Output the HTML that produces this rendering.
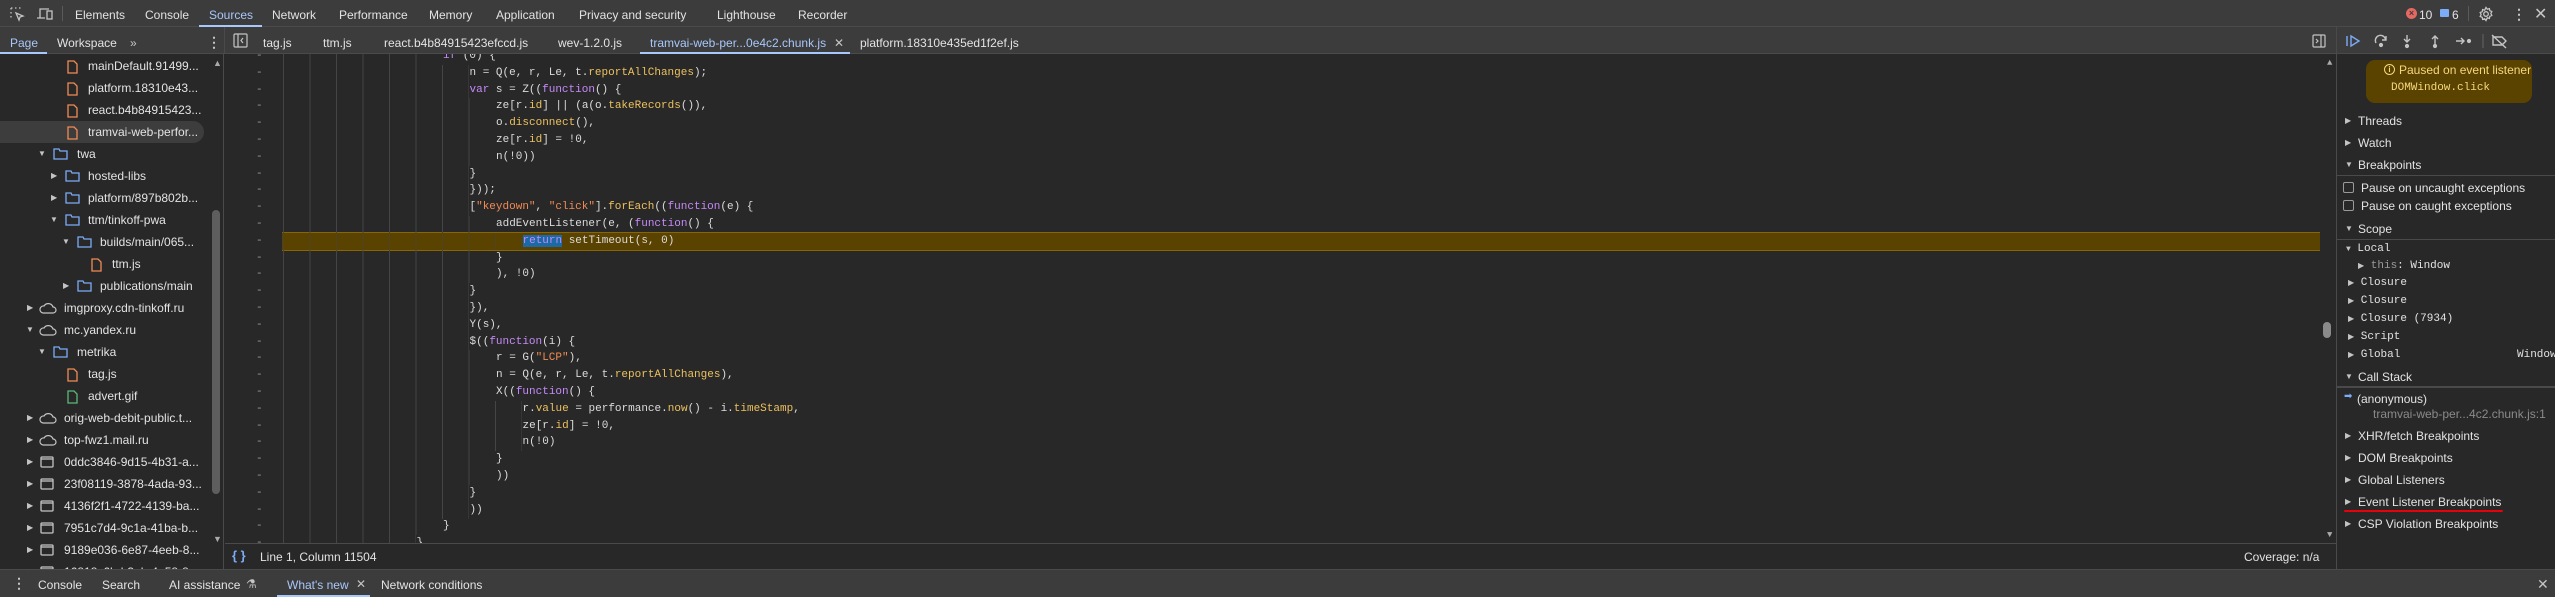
<!DOCTYPE html>
<html><head><meta charset="utf-8"><style>
*{margin:0;padding:0;box-sizing:border-box}
body{width:2555px;height:597px;overflow:hidden;background:#282828;font-family:"Liberation Sans",sans-serif;font-size:12px;color:#e3e3e3;position:relative}
.a{position:absolute;white-space:nowrap}
#top{left:0;top:0;width:2555px;height:27px;background:#3c3c3c;border-bottom:1px solid #4a4a4a}
#tabs{left:0;top:27px;width:2555px;height:27px;background:#3c3c3c;border-bottom:1px solid #4a4a4a}
.tt{top:8px;color:#e3e3e3}
.t2{top:36px;color:#e3e3e3}
.ul{height:2px;background:#a8c7fa}
#nav{left:0;top:54px;width:224px;height:515px;background:#282828;overflow:hidden;border-right:1px solid #4a4a4a}
.r{position:absolute;left:0;height:22px;width:210px;line-height:22px;white-space:nowrap}
.ar{position:absolute;top:0;font-size:8px;color:#c4c4c4}
.ic{position:absolute;top:5px}
#code{left:225px;top:54px;width:2111px;height:489px;background:#282828;overflow:hidden;font-family:"Liberation Mono",monospace;font-size:11px;color:#dcdcdc}
.l{position:absolute;left:58px;height:17px;line-height:17px;width:2000px;white-space:pre}
.g{position:absolute;left:0;top:0;height:17px;background:repeating-linear-gradient(to right,#454545 0 1px,transparent 1px 26.5px)}
.d{position:absolute;left:31px;height:17px;line-height:17px;color:#9a9a9a}
.k{color:#c58af9}.p{color:#ecc15e}.s{color:#f28b54}
.sel{background:#1b6aa6}
#rp{left:2336px;top:54px;width:219px;height:515px;background:#282828;border-left:1px solid #4a4a4a}
.h{position:absolute;left:0;width:219px;height:22px;line-height:22px;background:#282828}
.h b{position:absolute;left:8px;font-size:8px;color:#c4c4c4;font-weight:normal}
.h span{position:absolute;left:21px}
.m{font-family:"Liberation Mono",monospace;font-size:11px}
</style></head><body>
<div id="top" class="a"></div>
<svg class="a" style="left:9px;top:6px" width="16" height="16" viewBox="0 0 16 16" fill="none" stroke="#c4c4c4" stroke-width="1.3"><path d="M2 2h2M6 2h2M2 2v2M2 6v2M2 10v2M10 2h2" stroke-dasharray="1.5 1"/><path d="M7 7l7 3-3 1-1 3z"/></svg>
<svg class="a" style="left:36px;top:6px" width="18" height="16" viewBox="0 0 18 16" fill="none" stroke="#c4c4c4" stroke-width="1.3"><path d="M4 12V3h9M1 12h8"/><rect x="11" y="5" width="5" height="8"/></svg>
<div class="a" style="left:62px;top:6px;width:1px;height:15px;background:#5a5a5a"></div>
<div class="a tt" style="left:75px">Elements</div>
<div class="a tt" style="left:145px">Console</div>
<div class="a tt" style="left:209px;color:#a8c7fa">Sources</div>
<div class="a ul" style="left:199px;top:25px;width:63px"></div>
<div class="a tt" style="left:272px">Network</div>
<div class="a tt" style="left:339px">Performance</div>
<div class="a tt" style="left:429px">Memory</div>
<div class="a tt" style="left:496px">Application</div>
<div class="a tt" style="left:579px">Privacy and security</div>
<div class="a tt" style="left:717px">Lighthouse</div>
<div class="a tt" style="left:798px">Recorder</div>
<div class="a" style="left:2406px;top:8px;width:11px;height:11px;border-radius:50%;background:#e46962;color:#3c3c3c;font-size:9px;line-height:11px;text-align:center;font-weight:bold">×</div>
<div class="a tt" style="left:2419px">10</div>
<div class="a" style="left:2440px;top:9px;width:9px;height:8px;background:#7cacf8;border-radius:1px"></div>
<div class="a tt" style="left:2452px">6</div>
<div class="a" style="left:2468px;top:6px;width:1px;height:15px;background:#5a5a5a"></div>
<svg class="a" style="left:2478px;top:6px" width="16" height="16" viewBox="0 0 16 16" fill="none" stroke="#c4c4c4" stroke-width="1.3"><circle cx="8" cy="8" r="2.3"/><path d="M8 1.5l1.3 1.7 2.1-.6.4 2.1 2 .8-.9 2 .9 2-2 .8-.4 2.1-2.1-.6L8 14.5l-1.3-1.7-2.1.6-.4-2.1-2-.8.9-2-.9-2 2-.8.4-2.1 2.1.6z"/></svg>
<div class="a" style="left:2512px;top:6px;color:#c4c4c4;font-size:14px;font-weight:bold">⋮</div>
<div class="a" style="left:2534px;top:4px;color:#c4c4c4;font-size:16px">✕</div>

<div id="tabs" class="a"></div>
<div class="a t2" style="left:10px;color:#a8c7fa">Page</div>
<div class="a ul" style="left:0;top:52px;width:47px"></div>
<div class="a t2" style="left:57px">Workspace</div>
<div class="a t2" style="left:130px;color:#c4c4c4">»</div>
<div class="a" style="left:207px;top:34px;color:#c4c4c4;font-size:14px;font-weight:bold">⋮</div>
<div class="a" style="left:224px;top:27px;width:1px;height:27px;background:#4a4a4a"></div>
<svg class="a" style="left:233px;top:33px" width="15" height="15" viewBox="0 0 15 15" fill="none" stroke="#c4c4c4" stroke-width="1.2"><rect x="1" y="1" width="13" height="13" rx="1"/><path d="M5 1v13M10 5l-2 2.5 2 2.5"/></svg>
<div class="a t2" style="left:263px">tag.js</div>
<div class="a t2" style="left:323px">ttm.js</div>
<div class="a t2" style="left:384px">react.b4b84915423efccd.js</div>
<div class="a t2" style="left:558px">wev-1.2.0.js</div>
<div class="a t2" style="left:650px;color:#a8c7fa">tramvai-web-per...0e4c2.chunk.js</div>
<div class="a t2" style="left:834px;color:#c4c4c4">✕</div>
<div class="a ul" style="left:640px;top:52px;width:210px"></div>
<div class="a t2" style="left:860px">platform.18310e435ed1f2ef.js</div>
<svg class="a" style="left:2312px;top:34px" width="14" height="14" viewBox="0 0 14 14" fill="none" stroke="#c4c4c4" stroke-width="1.2"><rect x="1" y="1" width="12" height="12" rx="1"/><path d="M9 1v12M4 5l2 2-2 2"/></svg>
<div class="a" style="left:2336px;top:27px;width:1px;height:27px;background:#4a4a4a"></div>
<svg class="a" style="left:2345px;top:33px" width="180" height="16" viewBox="0 0 180 16" fill="none" stroke="#c4c4c4" stroke-width="1.4">
<path d="M2 3v10" stroke="#7cacf8"/><path d="M6 3l8 5-8 5z" stroke="#7cacf8"/>
<path d="M31 10a5 5 0 0 1 9-5l1 2M41 3v4h-4"/><circle cx="36" cy="12" r="1.4" fill="#c4c4c4"/>
<path d="M62 2v7M59 6l3 3 3-3"/><circle cx="62" cy="13" r="1.4" fill="#c4c4c4"/>
<path d="M90 12V4M87 6l3-3 3 3"/><circle cx="90" cy="13" r="1.4" fill="#c4c4c4"/>
<path d="M111 8h8M116 5l3 3-3 3"/><circle cx="124" cy="8" r="1.4" fill="#c4c4c4"/>
<path d="M138 1v14" stroke="#5a5a5a"/>
<path d="M148 4h9l4 4-4 4h-9zM147 2l14 13"/></svg>

<div id="nav" class="a">
<div class="r" style="top:1px"><svg class="ic" style="left:67px" width="11" height="14" viewBox="0 0 11 14" fill="none" stroke="#f28b54" stroke-width="1.3"><path d="M1 1h6l3 3v9H1z"/></svg><span style="position:absolute;left:88px">mainDefault.91499...</span></div>
<div class="r" style="top:23px"><svg class="ic" style="left:67px" width="11" height="14" viewBox="0 0 11 14" fill="none" stroke="#f28b54" stroke-width="1.3"><path d="M1 1h6l3 3v9H1z"/></svg><span style="position:absolute;left:88px">platform.18310e43...</span></div>
<div class="r" style="top:45px"><svg class="ic" style="left:67px" width="11" height="14" viewBox="0 0 11 14" fill="none" stroke="#f28b54" stroke-width="1.3"><path d="M1 1h6l3 3v9H1z"/></svg><span style="position:absolute;left:88px">react.b4b84915423...</span></div>
<div class="r" style="top:67px;width:204px;background:#3d3d3d;border-radius:0 11px 11px 0"><svg class="ic" style="left:67px" width="11" height="14" viewBox="0 0 11 14" fill="none" stroke="#f28b54" stroke-width="1.3"><path d="M1 1h6l3 3v9H1z"/></svg><span style="position:absolute;left:88px">tramvai-web-perfor...</span></div>
<div class="r" style="top:89px"><span class="ar" style="left:38px">▼</span><svg class="ic" style="left:53px" width="15" height="12" viewBox="0 0 15 12" fill="none" stroke="#7cacf8" stroke-width="1.3"><path d="M1 1h5l1 2h7v8H1z"/></svg><span style="position:absolute;left:77px">twa</span></div>
<div class="r" style="top:111px"><span class="ar" style="left:51px">▶</span><svg class="ic" style="left:65px" width="15" height="12" viewBox="0 0 15 12" fill="none" stroke="#7cacf8" stroke-width="1.3"><path d="M1 1h5l1 2h7v8H1z"/></svg><span style="position:absolute;left:88px">hosted-libs</span></div>
<div class="r" style="top:133px"><span class="ar" style="left:51px">▶</span><svg class="ic" style="left:65px" width="15" height="12" viewBox="0 0 15 12" fill="none" stroke="#7cacf8" stroke-width="1.3"><path d="M1 1h5l1 2h7v8H1z"/></svg><span style="position:absolute;left:88px">platform/897b802b...</span></div>
<div class="r" style="top:155px"><span class="ar" style="left:50px">▼</span><svg class="ic" style="left:65px" width="15" height="12" viewBox="0 0 15 12" fill="none" stroke="#7cacf8" stroke-width="1.3"><path d="M1 1h5l1 2h7v8H1z"/></svg><span style="position:absolute;left:88px">ttm/tinkoff-pwa</span></div>
<div class="r" style="top:177px"><span class="ar" style="left:62px">▼</span><svg class="ic" style="left:77px" width="15" height="12" viewBox="0 0 15 12" fill="none" stroke="#7cacf8" stroke-width="1.3"><path d="M1 1h5l1 2h7v8H1z"/></svg><span style="position:absolute;left:100px">builds/main/065...</span></div>
<div class="r" style="top:199px"><svg class="ic" style="left:91px" width="11" height="14" viewBox="0 0 11 14" fill="none" stroke="#f28b54" stroke-width="1.3"><path d="M1 1h6l3 3v9H1z"/></svg><span style="position:absolute;left:112px">ttm.js</span></div>
<div class="r" style="top:221px"><span class="ar" style="left:63px">▶</span><svg class="ic" style="left:77px" width="15" height="12" viewBox="0 0 15 12" fill="none" stroke="#7cacf8" stroke-width="1.3"><path d="M1 1h5l1 2h7v8H1z"/></svg><span style="position:absolute;left:100px">publications/main</span></div>
<div class="r" style="top:243px"><span class="ar" style="left:27px">▶</span><svg class="ic" style="left:39px" width="18" height="12" viewBox="0 0 18 12" fill="none" stroke="#c4c4c4" stroke-width="1.2"><path d="M4 11h10a3 3 0 0 0 0-6 5 5 0 0 0-9-1 3.5 3.5 0 0 0-1 7z"/></svg><span style="position:absolute;left:64px">imgproxy.cdn-tinkoff.ru</span></div>
<div class="r" style="top:265px"><span class="ar" style="left:26px">▼</span><svg class="ic" style="left:39px" width="18" height="12" viewBox="0 0 18 12" fill="none" stroke="#c4c4c4" stroke-width="1.2"><path d="M4 11h10a3 3 0 0 0 0-6 5 5 0 0 0-9-1 3.5 3.5 0 0 0-1 7z"/></svg><span style="position:absolute;left:64px">mc.yandex.ru</span></div>
<div class="r" style="top:287px"><span class="ar" style="left:38px">▼</span><svg class="ic" style="left:53px" width="15" height="12" viewBox="0 0 15 12" fill="none" stroke="#7cacf8" stroke-width="1.3"><path d="M1 1h5l1 2h7v8H1z"/></svg><span style="position:absolute;left:77px">metrika</span></div>
<div class="r" style="top:309px"><svg class="ic" style="left:67px" width="11" height="14" viewBox="0 0 11 14" fill="none" stroke="#f28b54" stroke-width="1.3"><path d="M1 1h6l3 3v9H1z"/></svg><span style="position:absolute;left:88px">tag.js</span></div>
<div class="r" style="top:331px"><svg class="ic" style="left:67px" width="11" height="14" viewBox="0 0 11 14" fill="none" stroke="#5bb974" stroke-width="1.3"><path d="M1 1h6l3 3v9H1z"/></svg><span style="position:absolute;left:88px">advert.gif</span></div>
<div class="r" style="top:353px"><span class="ar" style="left:27px">▶</span><svg class="ic" style="left:39px" width="18" height="12" viewBox="0 0 18 12" fill="none" stroke="#c4c4c4" stroke-width="1.2"><path d="M4 11h10a3 3 0 0 0 0-6 5 5 0 0 0-9-1 3.5 3.5 0 0 0-1 7z"/></svg><span style="position:absolute;left:64px">orig-web-debit-public.t...</span></div>
<div class="r" style="top:375px"><span class="ar" style="left:27px">▶</span><svg class="ic" style="left:39px" width="18" height="12" viewBox="0 0 18 12" fill="none" stroke="#c4c4c4" stroke-width="1.2"><path d="M4 11h10a3 3 0 0 0 0-6 5 5 0 0 0-9-1 3.5 3.5 0 0 0-1 7z"/></svg><span style="position:absolute;left:64px">top-fwz1.mail.ru</span></div>
<div class="r" style="top:397px"><span class="ar" style="left:27px">▶</span><svg class="ic" style="left:40px" width="14" height="12" viewBox="0 0 14 12" fill="none" stroke="#c4c4c4" stroke-width="1.3"><rect x="1" y="1" width="12" height="10" rx="1"/><path d="M1 3h12"/></svg><span style="position:absolute;left:64px">0ddc3846-9d15-4b31-a...</span></div>
<div class="r" style="top:419px"><span class="ar" style="left:27px">▶</span><svg class="ic" style="left:40px" width="14" height="12" viewBox="0 0 14 12" fill="none" stroke="#c4c4c4" stroke-width="1.3"><rect x="1" y="1" width="12" height="10" rx="1"/><path d="M1 3h12"/></svg><span style="position:absolute;left:64px">23f08119-3878-4ada-93...</span></div>
<div class="r" style="top:441px"><span class="ar" style="left:27px">▶</span><svg class="ic" style="left:40px" width="14" height="12" viewBox="0 0 14 12" fill="none" stroke="#c4c4c4" stroke-width="1.3"><rect x="1" y="1" width="12" height="10" rx="1"/><path d="M1 3h12"/></svg><span style="position:absolute;left:64px">4136f2f1-4722-4139-ba...</span></div>
<div class="r" style="top:463px"><span class="ar" style="left:27px">▶</span><svg class="ic" style="left:40px" width="14" height="12" viewBox="0 0 14 12" fill="none" stroke="#c4c4c4" stroke-width="1.3"><rect x="1" y="1" width="12" height="10" rx="1"/><path d="M1 3h12"/></svg><span style="position:absolute;left:64px">7951c7d4-9c1a-41ba-b...</span></div>
<div class="r" style="top:485px"><span class="ar" style="left:27px">▶</span><svg class="ic" style="left:40px" width="14" height="12" viewBox="0 0 14 12" fill="none" stroke="#c4c4c4" stroke-width="1.3"><rect x="1" y="1" width="12" height="10" rx="1"/><path d="M1 3h12"/></svg><span style="position:absolute;left:64px">9189e036-6e87-4eeb-8...</span></div>
<div class="r" style="top:507px"><span class="ar" style="left:27px">▶</span><svg class="ic" style="left:40px" width="14" height="12" viewBox="0 0 14 12" fill="none" stroke="#c4c4c4" stroke-width="1.3"><rect x="1" y="1" width="12" height="10" rx="1"/><path d="M1 3h12"/></svg><span style="position:absolute;left:64px">16818c6b-b3eb-4e58-8...</span></div>
<div class="a" style="left:213px;top:4px;font-size:9px;color:#aaa">▲</div>
<div class="a" style="left:212px;top:156px;width:8px;height:284px;border-radius:4px;background:#5e5e5e"></div>
<div class="a" style="left:213px;top:480px;font-size:9px;color:#aaa">▼</div>
</div>

<div id="code" class="a">
<div class="a" style="left:57px;top:178px;width:2038px;height:19px;background:#5a4200;border-top:1px solid #8a6600;border-bottom:1px solid #8a6600"></div>
<div class="d" style="top:-6px">-</div><div class="l" style="top:-6px"><div class="g" style="width:159px"></div><span style="padding-left:160px"><span class="k">if</span> (0) {</span></div>
<div class="d" style="top:10.8px">-</div><div class="l" style="top:10.8px"><div class="g" style="width:185.5px"></div><span style="padding-left:186.5px">n = Q(e, r, Le, t.<span class="p">reportAllChanges</span>);</span></div>
<div class="d" style="top:27.6px">-</div><div class="l" style="top:27.6px"><div class="g" style="width:185.5px"></div><span style="padding-left:186.5px"><span class="k">var</span> s = Z((<span class="k">function</span>() {</span></div>
<div class="d" style="top:44.4px">-</div><div class="l" style="top:44.4px"><div class="g" style="width:212px"></div><span style="padding-left:213px">ze[r.<span class="p">id</span>] || (a(o.<span class="p">takeRecords</span>()),</span></div>
<div class="d" style="top:61.2px">-</div><div class="l" style="top:61.2px"><div class="g" style="width:212px"></div><span style="padding-left:213px">o.<span class="p">disconnect</span>(),</span></div>
<div class="d" style="top:78px">-</div><div class="l" style="top:78px"><div class="g" style="width:212px"></div><span style="padding-left:213px">ze[r.<span class="p">id</span>] = !0,</span></div>
<div class="d" style="top:94.8px">-</div><div class="l" style="top:94.8px"><div class="g" style="width:212px"></div><span style="padding-left:213px">n(!0))</span></div>
<div class="d" style="top:111.6px">-</div><div class="l" style="top:111.6px"><div class="g" style="width:185.5px"></div><span style="padding-left:186.5px">}</span></div>
<div class="d" style="top:128.4px">-</div><div class="l" style="top:128.4px"><div class="g" style="width:185.5px"></div><span style="padding-left:186.5px">}));</span></div>
<div class="d" style="top:145.2px">-</div><div class="l" style="top:145.2px"><div class="g" style="width:185.5px"></div><span style="padding-left:186.5px">[<span class="s">"keydown"</span>, <span class="s">"click"</span>].<span class="p">forEach</span>((<span class="k">function</span>(e) {</span></div>
<div class="d" style="top:162px">-</div><div class="l" style="top:162px"><div class="g" style="width:212px"></div><span style="padding-left:213px">addEventListener(e, (<span class="k">function</span>() {</span></div>
<div class="d" style="top:178.8px">-</div><div class="l" style="top:178.8px"><div class="g" style="width:238.5px;opacity:.5"></div><span style="padding-left:239.5px"><span class="k sel">return</span> setTimeout(s, 0)</span></div>
<div class="d" style="top:195.6px">-</div><div class="l" style="top:195.6px"><div class="g" style="width:212px"></div><span style="padding-left:213px">}</span></div>
<div class="d" style="top:212.4px">-</div><div class="l" style="top:212.4px"><div class="g" style="width:212px"></div><span style="padding-left:213px">), !0)</span></div>
<div class="d" style="top:229.2px">-</div><div class="l" style="top:229.2px"><div class="g" style="width:185.5px"></div><span style="padding-left:186.5px">}</span></div>
<div class="d" style="top:246px">-</div><div class="l" style="top:246px"><div class="g" style="width:185.5px"></div><span style="padding-left:186.5px">}),</span></div>
<div class="d" style="top:262.8px">-</div><div class="l" style="top:262.8px"><div class="g" style="width:185.5px"></div><span style="padding-left:186.5px">Y(s),</span></div>
<div class="d" style="top:279.6px">-</div><div class="l" style="top:279.6px"><div class="g" style="width:185.5px"></div><span style="padding-left:186.5px">$((<span class="k">function</span>(i) {</span></div>
<div class="d" style="top:296.4px">-</div><div class="l" style="top:296.4px"><div class="g" style="width:212px"></div><span style="padding-left:213px">r = G(<span class="s">"LCP"</span>),</span></div>
<div class="d" style="top:313.2px">-</div><div class="l" style="top:313.2px"><div class="g" style="width:212px"></div><span style="padding-left:213px">n = Q(e, r, Le, t.<span class="p">reportAllChanges</span>),</span></div>
<div class="d" style="top:330px">-</div><div class="l" style="top:330px"><div class="g" style="width:212px"></div><span style="padding-left:213px">X((<span class="k">function</span>() {</span></div>
<div class="d" style="top:346.8px">-</div><div class="l" style="top:346.8px"><div class="g" style="width:238.5px"></div><span style="padding-left:239.5px">r.<span class="p">value</span> = performance.<span class="p">now</span>() - i.<span class="p">timeStamp</span>,</span></div>
<div class="d" style="top:363.6px">-</div><div class="l" style="top:363.6px"><div class="g" style="width:238.5px"></div><span style="padding-left:239.5px">ze[r.<span class="p">id</span>] = !0,</span></div>
<div class="d" style="top:380.4px">-</div><div class="l" style="top:380.4px"><div class="g" style="width:238.5px"></div><span style="padding-left:239.5px">n(!0)</span></div>
<div class="d" style="top:397.2px">-</div><div class="l" style="top:397.2px"><div class="g" style="width:212px"></div><span style="padding-left:213px">}</span></div>
<div class="d" style="top:414px">-</div><div class="l" style="top:414px"><div class="g" style="width:212px"></div><span style="padding-left:213px">))</span></div>
<div class="d" style="top:430.8px">-</div><div class="l" style="top:430.8px"><div class="g" style="width:185.5px"></div><span style="padding-left:186.5px">}</span></div>
<div class="d" style="top:447.6px">-</div><div class="l" style="top:447.6px"><div class="g" style="width:185.5px"></div><span style="padding-left:186.5px">))</span></div>
<div class="d" style="top:464.4px">-</div><div class="l" style="top:464.4px"><div class="g" style="width:159px"></div><span style="padding-left:160px">}</span></div>
<div class="d" style="top:481.2px">-</div><div class="l" style="top:481.2px"><div class="g" style="width:132.5px"></div><span style="padding-left:133.5px">}</span></div>
<div class="a" style="left:2102px;top:4px;font-size:9px;color:#aaa">▲</div>
<div class="a" style="left:2098px;top:268px;width:8px;height:16px;border-radius:4px;background:#8a8a8a"></div>
<div class="a" style="left:2102px;top:476px;font-size:9px;color:#aaa">▼</div>
</div>

<div class="a" style="left:225px;top:543px;width:2111px;height:26px;background:#282828;border-top:1px solid #4a4a4a"></div>
<div class="a" style="left:232px;top:548px;color:#7cacf8;font-size:13px;font-weight:bold">{ }</div>
<div class="a" style="left:260px;top:550px">Line 1, Column 11504</div>
<div class="a" style="left:2244px;top:550px">Coverage: n/a</div>

<div id="rp" class="a">
<div class="a" style="left:29px;top:6px;width:166px;height:43px;background:#5a4300;border-radius:9px"></div>
<div class="a" style="left:47px;top:10px;width:11px;height:11px;border:1.3px solid #f5d77c;border-radius:50%;font-size:8px;line-height:9px;text-align:center;color:#f5d77c;font-weight:bold">i</div>
<div class="a" style="left:62px;top:9px;color:#f5d77c">Paused on event listener</div>
<div class="a m" style="left:54px;top:28px;color:#f5d77c">DOMWindow.click</div>
<div class="h" style="top:56px"><b>▶</b><span>Threads</span></div>
<div class="h" style="top:78px"><b>▶</b><span>Watch</span></div>
<div class="h" style="top:100px;border-bottom:1px solid #4a4a4a"><b>▼</b><span>Breakpoints</span></div>
<div class="a" style="left:6px;top:128px;width:11px;height:11px;border:1px solid #9a9a9a;border-radius:2px"></div>
<div class="a" style="left:24px;top:127px">Pause on uncaught exceptions</div>
<div class="a" style="left:6px;top:146px;width:11px;height:11px;border:1px solid #9a9a9a;border-radius:2px"></div>
<div class="a" style="left:24px;top:145px">Pause on caught exceptions</div>
<div class="h" style="top:164px;border-bottom:1px solid #4a4a4a"><b>▼</b><span>Scope</span></div>
<div class="a m" style="left:9px;top:189px"><span style="font-size:8px;color:#c4c4c4">▼</span> Local</div>
<div class="a m" style="left:21px;top:206px"><span style="font-size:8px;color:#c4c4c4">▶</span> <span style="color:#9a9a9a">this</span>: Window</div>
<div class="a m" style="left:11px;top:223px"><span style="font-size:8px;color:#c4c4c4">▶</span> Closure</div>
<div class="a m" style="left:11px;top:241px"><span style="font-size:8px;color:#c4c4c4">▶</span> Closure</div>
<div class="a m" style="left:11px;top:259px"><span style="font-size:8px;color:#c4c4c4">▶</span> Closure (7934)</div>
<div class="a m" style="left:11px;top:277px"><span style="font-size:8px;color:#c4c4c4">▶</span> Script</div>
<div class="a m" style="left:11px;top:295px"><span style="font-size:8px;color:#c4c4c4">▶</span> Global</div>
<div class="a m" style="left:180px;top:295px">Window</div>
<div class="h" style="top:312px;border-bottom:2px solid #4a4a4a"><b>▼</b><span>Call Stack</span></div>
<div class="a" style="left:7px;top:337px;color:#7cacf8;font-size:10px">➡</div>
<div class="a" style="left:20px;top:338px">(anonymous)</div>
<div class="a" style="left:36px;top:353px;color:#8a8a8a">tramvai-web-per...4c2.chunk.js:1</div>
<div class="h" style="top:371px"><b>▶</b><span>XHR/fetch Breakpoints</span></div>
<div class="h" style="top:393px"><b>▶</b><span>DOM Breakpoints</span></div>
<div class="h" style="top:415px"><b>▶</b><span>Global Listeners</span></div>
<div class="h" style="top:437px"><b>▶</b><span>Event Listener Breakpoints</span></div>
<div class="a" style="left:7px;top:456px;width:159px;height:2px;background:#e8000b;border-radius:1px"></div>
<div class="h" style="top:459px"><b>▶</b><span>CSP Violation Breakpoints</span></div>
</div>

<div class="a" style="left:0;top:569px;width:2555px;height:28px;background:#3c3c3c;border-top:1px solid #4a4a4a"></div>
<div class="a" style="left:12px;top:575px;color:#c4c4c4;font-size:14px;font-weight:bold">⋮</div>
<div class="a" style="left:38px;top:578px">Console</div>
<div class="a" style="left:102px;top:578px">Search</div>
<div class="a" style="left:169px;top:578px">AI assistance</div>
<div class="a" style="left:246px;top:577px;color:#c4c4c4">⚗</div>
<div class="a" style="left:287px;top:578px;color:#a8c7fa">What's new</div>
<div class="a" style="left:356px;top:577px;color:#c4c4c4">✕</div>
<div class="a ul" style="left:277px;top:595px;width:93px"></div>
<div class="a" style="left:381px;top:578px">Network conditions</div>
<div class="a" style="left:2537px;top:576px;color:#c4c4c4;font-size:14px">✕</div>
</body></html>
